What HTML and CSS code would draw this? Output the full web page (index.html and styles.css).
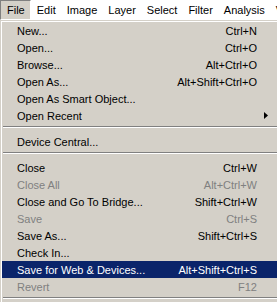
FILE: index.html
```html
<!DOCTYPE html>
<html lang="en">
<head>
  <meta charset="UTF-8">
  <title>File Menu</title>
  <link rel="stylesheet" href="styles.css">
</head>
<body>
  <div class="menubar">
    <div class="menubar-item open">File</div>
    <div class="menubar-item">Edit</div>
    <div class="menubar-item">Image</div>
    <div class="menubar-item">Layer</div>
    <div class="menubar-item">Select</div>
    <div class="menubar-item">Filter</div>
    <div class="menubar-item">Analysis</div>
    <div class="menubar-item">View</div>
  </div>

  <div class="menu">
    <div class="menu-item"><span>New...</span><span class="shortcut">Ctrl+N</span><span></span></div>
    <div class="menu-item"><span>Open...</span><span class="shortcut">Ctrl+O</span><span></span></div>
    <div class="menu-item"><span>Browse...</span><span class="shortcut">Alt+Ctrl+O</span><span></span></div>
    <div class="menu-item"><span>Open As...</span><span class="shortcut">Alt+Shift+Ctrl+O</span><span></span></div>
    <div class="menu-item"><span>Open As Smart Object...</span><span class="shortcut"></span><span></span></div>
    <div class="menu-item"><span>Open Recent</span><span class="shortcut"></span><span class="arrow"><svg width="4" height="7" viewBox="0 0 4 7"><polygon points="0,0 4,3.5 0,7" fill="#000"/></svg></span></div>
    <div class="separator"></div>
    <div class="menu-item"><span>Device Central...</span><span class="shortcut"></span><span></span></div>
    <div class="separator"></div>
    <div class="menu-item"><span>Close</span><span class="shortcut">Ctrl+W</span><span></span></div>
    <div class="menu-item disabled"><span>Close All</span><span class="shortcut">Alt+Ctrl+W</span><span></span></div>
    <div class="menu-item"><span>Close and Go To Bridge...</span><span class="shortcut">Shift+Ctrl+W</span><span></span></div>
    <div class="menu-item disabled"><span>Save</span><span class="shortcut">Ctrl+S</span><span></span></div>
    <div class="menu-item"><span>Save As...</span><span class="shortcut">Shift+Ctrl+S</span><span></span></div>
    <div class="menu-item"><span>Check In...</span><span class="shortcut"></span><span></span></div>
    <div class="menu-item active"><span>Save for Web &amp; Devices...</span><span class="shortcut">Alt+Shift+Ctrl+S</span><span></span></div>
    <div class="menu-item disabled"><span>Revert</span><span class="shortcut">F12</span><span></span></div>
    <div class="separator"></div>
  </div>
</body>
</html>
```

FILE: styles.css
```css
html, body {
  margin: 0;
  height: 100%;
  overflow: hidden;
}
body {
  font-family: 'Liberation Sans', Arial, sans-serif;
  font-size: 11px;
  color: #000;
  background: #d4d0c8;
}
.menubar {
  display: flex;
  height: 20px;
  background: #fff;
  white-space: nowrap;
}
.menubar-item {
  padding: 0 4px 0 5px;
  line-height: 18px;
  border: 1px solid transparent;
}
.menubar-item.open {
  padding: 0 5px 0 6px;
  background: #d4d0c8;
  border-color: #808080 #fff #fff #808080;
}
.menu {
  width: 284px;
  padding: 1px;
  background: #d4d0c8;
  border: 1px solid;
  border-color: #d4d0c8 #404040 #404040 #d4d0c8;
  box-shadow: inset 1px 1px #fff, inset -1px -1px #808080;
}
.menu-item {
  display: grid;
  grid-template-columns: 1fr auto 29px;
  align-items: center;
  height: 17px;
  padding-left: 15px;
  white-space: nowrap;
}
.menu-item.disabled {
  color: #808080;
}
.menu-item.active {
  background: #0a246a;
  color: #fff;
}
.shortcut {
  text-align: right;
}
.arrow {
  display: flex;
  padding-left: 7px;
}
.separator {
  margin: 2px 1px 5px;
  border-top: 1px solid #808080;
  border-bottom: 1px solid #fff;
}
```
